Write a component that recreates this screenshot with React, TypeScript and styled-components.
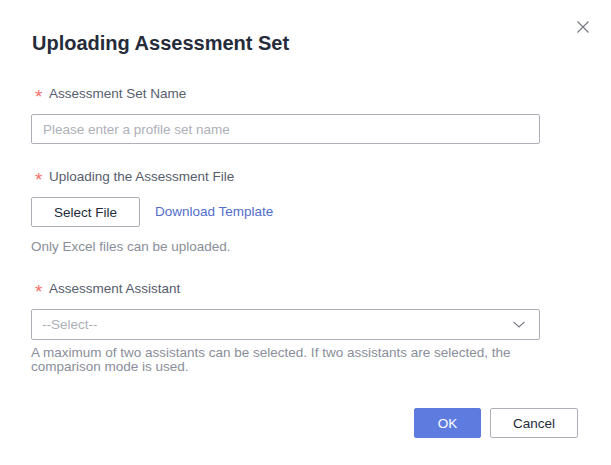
import React from 'react';
import styled, { createGlobalStyle } from 'styled-components';

const GlobalStyle = createGlobalStyle`
  html, body {
    margin: 0;
    background: #ffffff;
  }
  body {
    font-family: "Liberation Sans", Arial, sans-serif;
  }
  * {
    box-sizing: border-box;
  }
`;

const fields = [
  { label: 'Assessment Set Name', key: 'name' },
  { label: 'Uploading the Assessment File', key: 'file' },
  { label: 'Assessment Assistant', key: 'assistant' },
];

const App = () => {
  return (
    <>
      <GlobalStyle />
      <Dialog>
        <CloseButton aria-label="close">
          <svg width="12" height="12" viewBox="0 0 12 12">
            <path d="M0.5 0.5 L11.5 11.5 M11.5 0.5 L0.5 11.5" stroke="#71757f" strokeWidth="1.1" fill="none" />
          </svg>
        </CloseButton>

        <Title>Uploading Assessment Set</Title>

        <Form>
          <Field>
            <Label>
              <Star>*</Star>
              {fields[0].label}
            </Label>
            <TextInput placeholder="Please enter a profile set name" />
          </Field>

          <Field>
            <Label>
              <Star>*</Star>
              {fields[1].label}
            </Label>
            <UploadRow>
              <Button $width={109}>Select File</Button>
              <Link href="#">Download Template</Link>
            </UploadRow>
            <Hint $top={11} $lineHeight={18}>Only Excel files can be uploaded.</Hint>
          </Field>

          <Field>
            <Label>
              <Star>*</Star>
              {fields[2].label}
            </Label>
            <SelectBox>
              <SelectPlaceholder>--Select--</SelectPlaceholder>
              <svg width="12" height="7" viewBox="0 0 12 7">
                <polyline points="0.5,0.8 6,6 11.5,0.8" stroke="#71757f" strokeWidth="1.1" fill="none" />
              </svg>
            </SelectBox>
            <Hint $top={6} $lineHeight={14}>
              A maximum of two assistants can be selected. If two assistants are selected, the comparison mode is used.
            </Hint>
          </Field>
        </Form>

        <Footer>
          <Button $primary $width={67}>OK</Button>
          <Button $width={88}>Cancel</Button>
        </Footer>
      </Dialog>
    </>
  );
};

export default App;

const Dialog = styled.div`
  position: relative;
  width: 611px;
  height: 465px;
  padding: 29px 33px 0 31px;
  background: #ffffff;
  color: #252b3a;
`;

const CloseButton = styled.button`
  position: absolute;
  top: 20px;
  right: 22px;
  width: 13px;
  height: 13px;
  padding: 0;
  border: none;
  background: transparent;
  display: flex;
  align-items: center;
  justify-content: center;
  cursor: pointer;
`;

const Title = styled.h2`
  margin: 0;
  padding-left: 1px;
  font-size: 20px;
  line-height: 28px;
  font-weight: 700;
  color: #252b3a;
`;

const Form = styled.div`
  width: 509px;
  margin-top: 27px;
  display: flex;
  flex-direction: column;
  gap: 23px;
`;

const Field = styled.div`
  display: flex;
  flex-direction: column;
`;

const Label = styled.div`
  display: flex;
  align-items: center;
  height: 20px;
  margin-bottom: 10px;
  padding-left: 4px;
  font-size: 13.5px;
  line-height: 20px;
  color: #575d6c;
`;

const Star = styled.span`
  display: inline-block;
  width: 14px;
  height: 20px;
  padding-top: 3px;
  font-size: 19px;
  line-height: 20px;
  color: #f66f6a;
`;

const TextInput = styled.input`
  width: 100%;
  height: 30px;
  padding: 0 11px;
  border: 1px solid #adb0b8;
  border-radius: 2px;
  font-family: inherit;
  font-size: 13.5px;
  color: #252b3a;
  outline: none;

  &::placeholder {
    color: #adb0b8;
  }
`;

const UploadRow = styled.div`
  display: flex;
  align-items: center;
  gap: 15px;
`;

const Button = styled.button<{ $primary?: boolean; $width: number }>`
  width: ${(p) => p.$width}px;
  height: 30px;
  padding: 0;
  border: 1px solid ${(p) => (p.$primary ? '#5e7ce0' : '#adb0b8')};
  border-radius: 2px;
  background: ${(p) => (p.$primary ? '#5e7ce0' : '#ffffff')};
  color: ${(p) => (p.$primary ? '#ffffff' : '#252b3a')};
  font-family: inherit;
  font-size: 13.5px;
  cursor: pointer;
`;

const Link = styled.a`
  font-size: 13.5px;
  color: #526ecc;
  text-decoration: none;
  margin-top: -2px;
`;

const Hint = styled.div<{ $top: number; $lineHeight: number }>`
  margin-top: ${(p) => p.$top}px;
  font-size: 13.5px;
  line-height: ${(p) => p.$lineHeight}px;
  color: #8a8e99;
`;

const SelectBox = styled.div`
  display: flex;
  align-items: center;
  justify-content: space-between;
  height: 31px;
  padding: 0 14px 0 10px;
  border: 1px solid #adb0b8;
  border-radius: 2px;
`;

const SelectPlaceholder = styled.span`
  font-size: 13.5px;
  color: #adb0b8;
`;

const Footer = styled.div`
  display: flex;
  justify-content: flex-end;
  gap: 9px;
  margin-top: 34px;
`;
